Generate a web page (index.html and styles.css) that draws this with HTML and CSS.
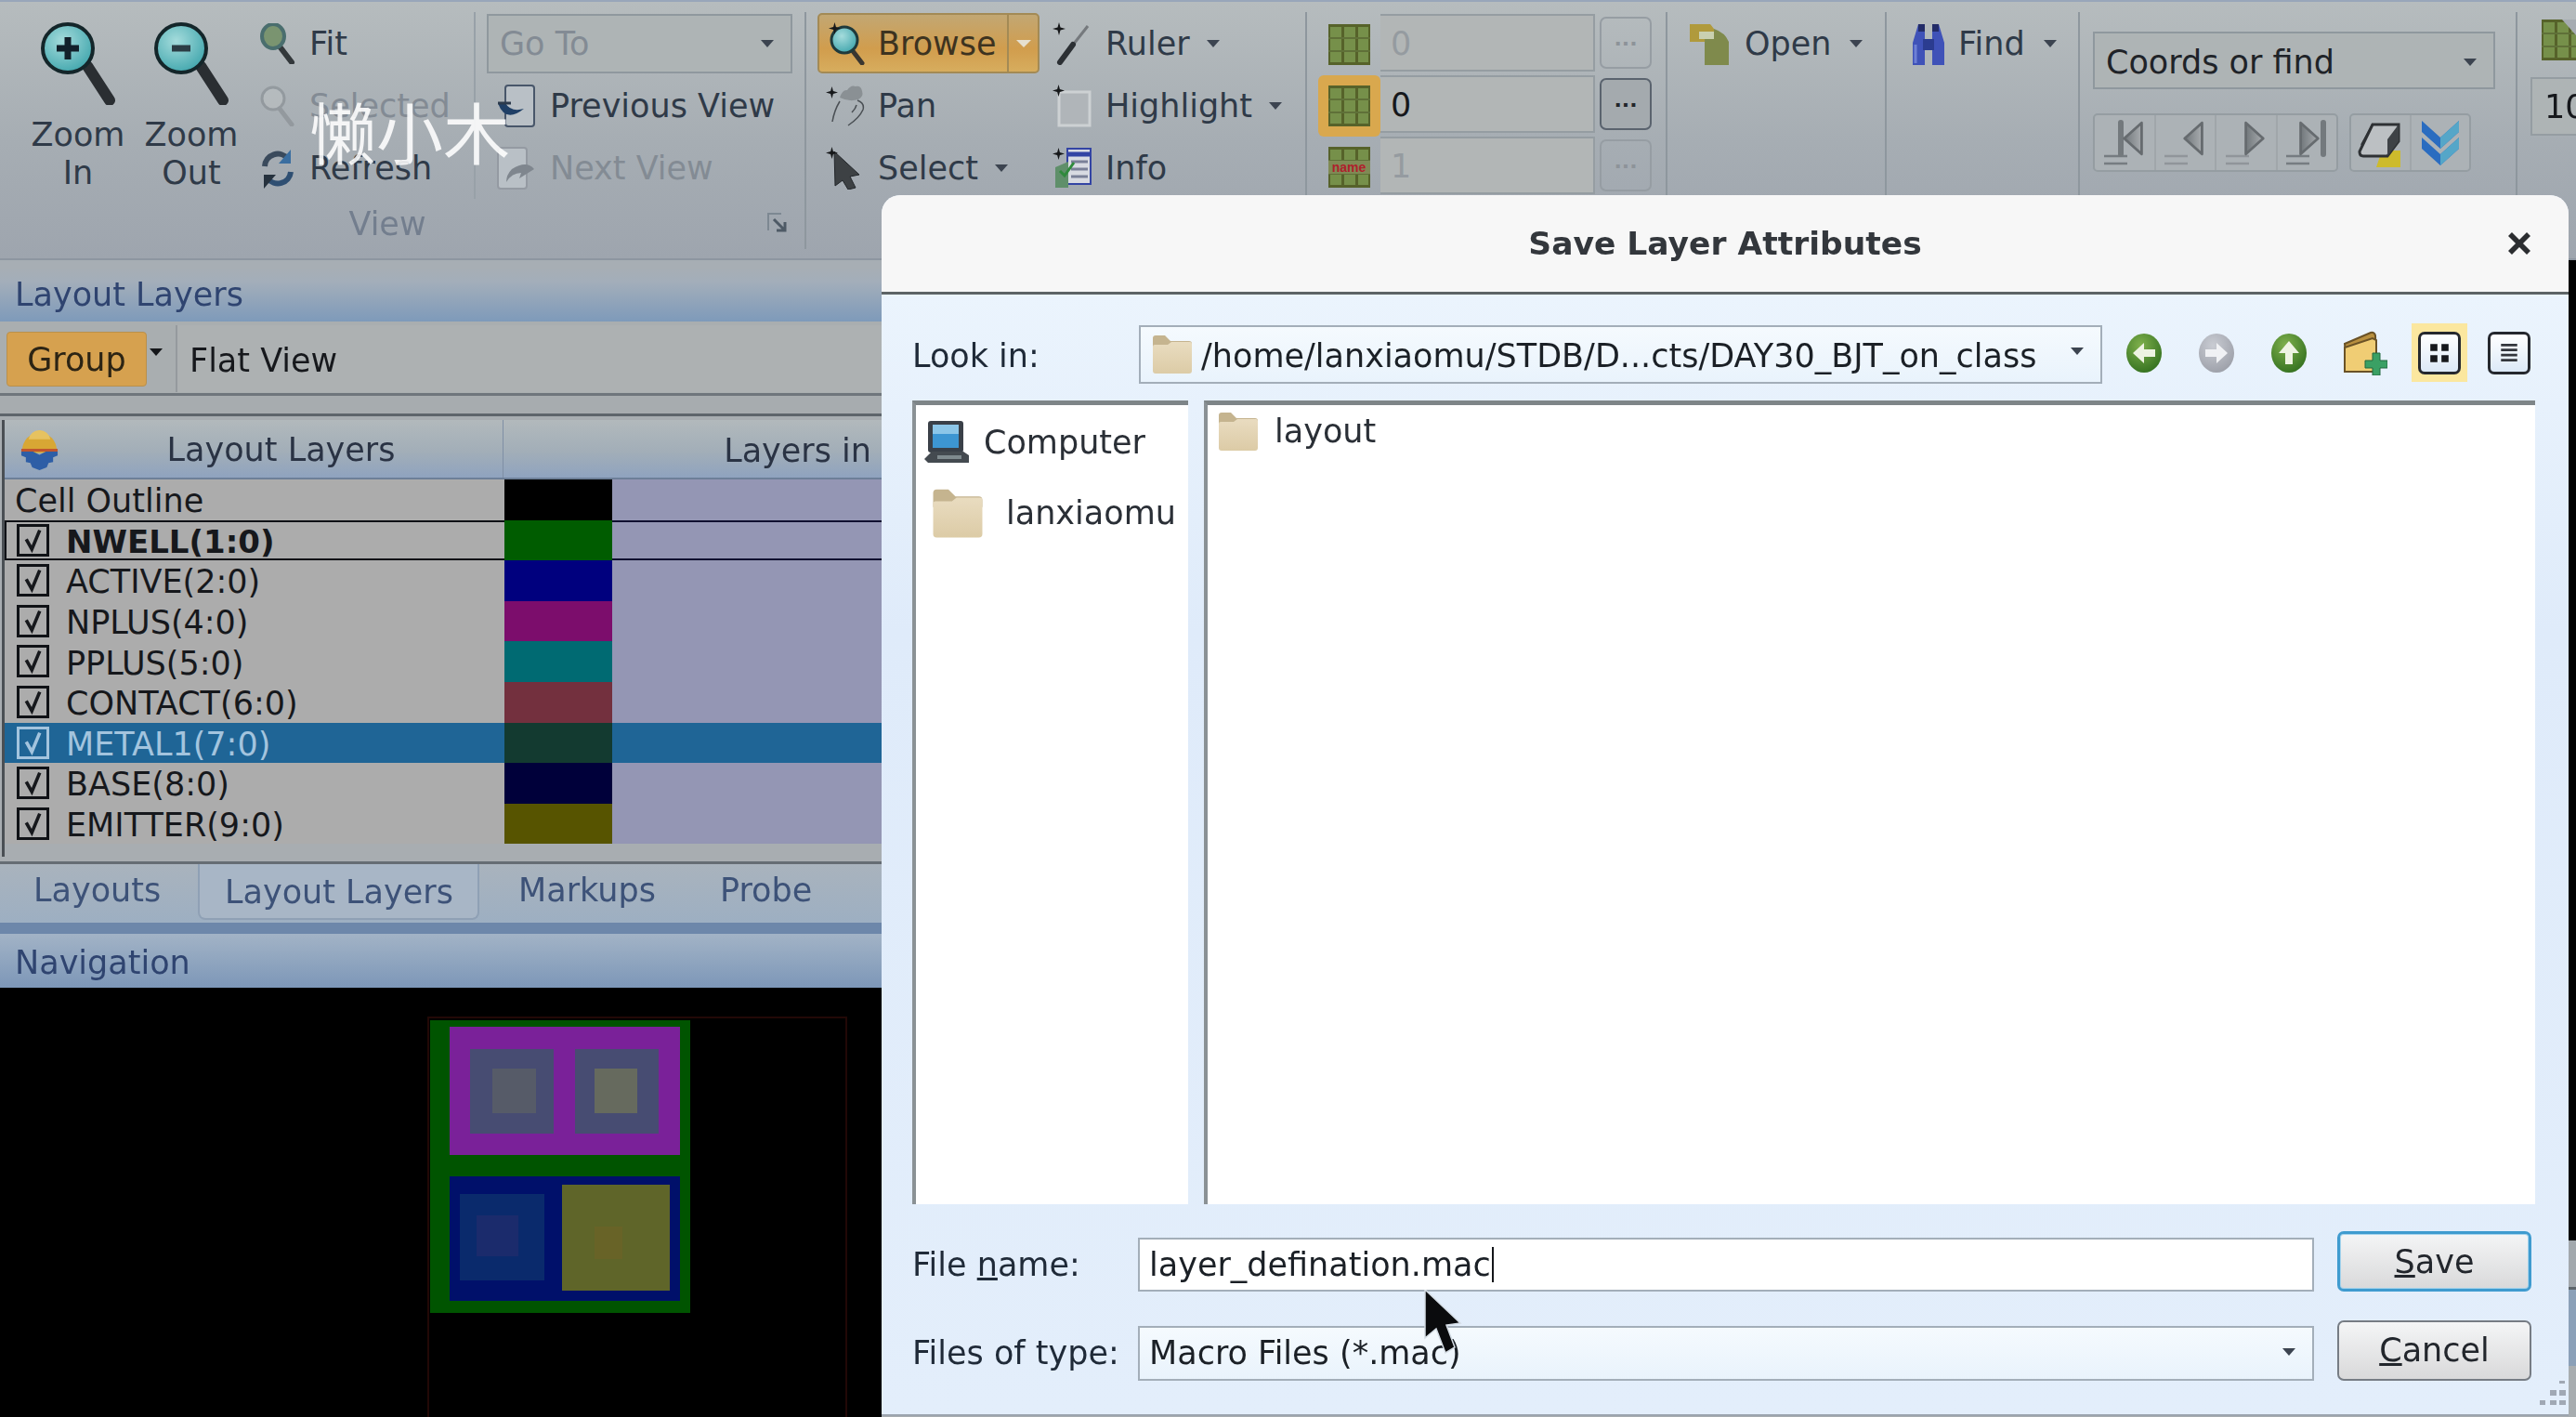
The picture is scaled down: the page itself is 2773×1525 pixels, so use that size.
FILE: index.html
```html
<!DOCTYPE html>
<html lang="en">
<head>
  <meta charset="UTF-8" />
  <title>Save Layer Attributes</title>
  <link rel="stylesheet" href="styles.css">
</head>
<body>

<svg class="defs" aria-hidden="true">
  <defs>
    <radialGradient id="teal" cx="40%" cy="35%" r="70%"><stop offset="0" stop-color="#a5dcdc"/><stop offset="1" stop-color="#3fa5ac"/></radialGradient>
    <radialGradient id="greenball" cx="40%" cy="30%" r="75%"><stop offset="0" stop-color="#7fb04c"/><stop offset="1" stop-color="#33701f"/></radialGradient>
    <radialGradient id="greyball" cx="40%" cy="30%" r="75%"><stop offset="0" stop-color="#c9ccd3"/><stop offset="1" stop-color="#9c9fa8"/></radialGradient>
    <linearGradient id="folder" x1="0" y1="0" x2="0" y2="1"><stop offset="0" stop-color="#e9dcc0"/><stop offset="1" stop-color="#dccba6"/></linearGradient>
    <linearGradient id="tri" x1="0" y1="0" x2="1" y2="0"><stop offset="0" stop-color="#71777b"/><stop offset="1" stop-color="#a8acaf"/></linearGradient>
    <symbol id="lens" viewBox="0 0 82 90">
      <path d="M50 48 L74 85" stroke="#2a2e32" stroke-width="12" stroke-linecap="round"/>
      <ellipse cx="29" cy="29" rx="27" ry="26" fill="url(#teal)" stroke="#14262a" stroke-width="4"/>
    </symbol>
    <symbol id="small-lens" viewBox="0 0 38 44">
      <path d="M21 25 L34 42" stroke="#33383b" stroke-width="6" stroke-linecap="round"/>
      <ellipse cx="14" cy="14" rx="12" ry="13" fill="#7a9470" stroke="#4a6e6e" stroke-width="4"/>
    </symbol>
    <symbol id="star" viewBox="0 0 14 14">
      <path d="M7 0 L8.500 5.500 L14 7 L8.500 8.500 L7 14 L5.500 8.500 L0 7 L5.500 5.500Z" fill="#16181a"/>
    </symbol>
    <symbol id="folder-ic" viewBox="0 0 46 44">
      <path d="M2 5 a3 3 0 0 1 3-3 h10 l6 6 h20 a3 3 0 0 1 3 3 v6 H2z" fill="#c5b48f"/>
      <path d="M2 14 q0-2 2-2 h14 l4-3 h20 q2 0 2 2 v29 q0 3-3 3 H5 q-3 0-3-3z" fill="url(#folder)"/>
    </symbol>
    <symbol id="cell-ic" viewBox="0 0 45 44">
      <rect width="45" height="44" fill="#56622a"/>
      <path d="M2 3 h12 v38 H2z M17 3 h12 v38 H17z M32 3 h11 v38 H32z" fill="#76904a"/>
      <path d="M0 15 H45 M0 29 H45" stroke="#5f7038" stroke-width="2"/>
    </symbol>
    <symbol id="tick" viewBox="0 0 24 24"><path d="M6 11 L11 20 L18 3" fill="none" stroke="currentColor" stroke-width="3"/></symbol>
    <symbol id="tri-left" viewBox="0 0 30 40"><path d="M24 2 L4 20 L24 38Z" fill="url(#tri)" stroke="#666b6f" stroke-width="3" stroke-linejoin="round"/></symbol>
    <symbol id="tri-right" viewBox="0 0 30 40"><path d="M6 2 L26 20 L6 38Z" fill="url(#tri)" stroke="#666b6f" stroke-width="3" stroke-linejoin="round"/></symbol>
  </defs>
</svg>

<div class="app">

  <div class="ribbon">

    <div class="group group-view">
      <div class="group-body">
        <div class="big-btn">
          <svg class="ic-zoom" viewBox="0 0 82 90"><use href="#lens"/><path d="M29 17v24M17 29h24" stroke="#12202a" stroke-width="7"/></svg>
          <span>Zoom<br>In</span>
        </div>
        <div class="big-btn">
          <svg class="ic-zoom" viewBox="0 0 82 90"><use href="#lens"/><path d="M19 29h20" stroke="#2b3c44" stroke-width="7"/></svg>
          <span>Zoom<br>Out</span>
        </div>
        <div class="stack col-fit">
          <div class="item"><svg class="ic ic-38" viewBox="0 0 38 44"><use href="#small-lens"/></svg>Fit</div>
          <div class="item off"><svg class="ic ic-38 faded" viewBox="0 0 38 44"><path d="M21 25 L34 42" stroke="#8e9499" stroke-width="5" stroke-linecap="round"/><circle cx="14" cy="14" r="12" fill="#b8bdc0" stroke="#8e9499" stroke-width="3"/></svg>Selected</div>
          <div class="item"><svg class="ic ic-38" viewBox="0 0 38 44"><path d="M5 20 A14 14 0 0 1 30 12" fill="none" stroke="#3a4a5c" stroke-width="6"/><path d="M33 2 v15 h-13z" fill="#3a6ea0"/><path d="M33 26 A14 14 0 0 1 8 33" fill="none" stroke="#2f4f72" stroke-width="6"/><path d="M4 44 v-15 h13z" fill="#26323e"/></svg>Refresh</div>
        </div>
        <div class="stack col-goto">
          <div class="row-slot"><div class="combo combo-goto off"><span>Go To</span><i class="arrow"></i></div></div>
          <div class="item item-view"><svg class="ic ic-44" viewBox="0 0 44 46"><rect x="11" y="1" width="31" height="44" rx="3" fill="#b9c0c6" stroke="#48566a" stroke-width="2"/><path d="M3 20 q8 22 28 6 q-14 4-20-6z" fill="#1f3f66"/><path d="M3 20 h14" stroke="#2c3a4c" stroke-width="3"/></svg>Previous View</div>
          <div class="item item-view off"><svg class="ic ic-44" viewBox="0 0 44 46"><rect x="3" y="1" width="31" height="44" rx="3" fill="#b9c0c6" stroke="#949aa2" stroke-width="2"/><path d="M42 24 q-8 -10 -24 0 q-6 6 -6 14 q6-10 16-10 l-2 6z" fill="#7f868e"/></svg>Next View</div>
        </div>
      </div>
      <div class="group-label">View<svg class="launcher" viewBox="0 0 22 22"><path d="M2 20V2h14" fill="none" stroke="#7d8892" stroke-width="2"/><path d="M8 8 l12 12 M20 11v9h-9" fill="none" stroke="#4e5a66" stroke-width="3"/></svg></div>
    </div>

    <div class="group group-browse">
      <div class="group-body browse-body">
        <div class="stack col-browse">
          <div class="row-slot">
            <div class="split-btn">
              <div class="split-main"><svg class="ic ic-42" viewBox="0 0 42 46"><path d="M25 27 L38 44" stroke="#3a3630" stroke-width="5" stroke-linecap="round"/><circle cx="19" cy="19" r="14" fill="url(#teal)" stroke="#1f3a3c" stroke-width="3"/><use href="#star" x="2" y="0" width="13" height="13"/></svg>Browse</div>
              <div class="split-drop"><i class="arrow arrow-lt"></i></div>
            </div>
          </div>
          <div class="item item-tool"><svg class="ic ic-42" viewBox="0 0 42 46"><path d="M15 14 q3-9 8-8 q4-6 9-4 q6-1 7 5 q2 6-4 9 q-10 3-20-2z" fill="#8a9094"/><path d="M7 40 Q9 28 15 18 M24 44 Q36 36 40 27 Q42 20 34 17 M28 30 Q32 26 33 22" fill="none" stroke="#4a4f54" stroke-width="1.500"/><use href="#star" x="0" y="2" width="13" height="13"/></svg>Pan</div>
          <div class="item item-tool"><svg class="ic ic-42" viewBox="0 0 42 46"><path d="M9 5 L36 30 L26 32 L32 44 L24 46 L18 36 L10 42Z" fill="#3d4144" stroke="#22262a" stroke-width="1"/><use href="#star" x="0" y="0" width="13" height="13"/></svg>Select<i class="arrow arrow-tool"></i></div>
        </div>
        <div class="stack col-ruler">
          <div class="item item-tool2"><svg class="ic ic-42" viewBox="0 0 42 46"><use href="#star" x="0" y="0" width="14" height="14"/><path d="M8 42 L38 4" stroke="#75797d" stroke-width="3"/><path d="M8 43 L22 24" stroke="#2c3034" stroke-width="6" stroke-linecap="round"/></svg>Ruler<i class="arrow arrow-ruler"></i></div>
          <div class="item item-tool2"><svg class="ic ic-42" viewBox="0 0 42 46"><rect x="7" y="8" width="33" height="36" fill="#b0b5b9" stroke="#cdd1d3" stroke-width="3"/><use href="#star" x="0" y="0" width="13" height="13"/></svg>Highlight<i class="arrow arrow-high"></i></div>
          <div class="item item-tool2"><svg class="ic ic-42" viewBox="0 0 42 46"><rect x="16" y="2" width="25" height="38" fill="#d8dae2" stroke="#3344a4" stroke-width="2"/><path d="M16 8h25" stroke="#3344a4" stroke-width="5"/><path d="M20 16h18M20 24h18M20 32h18" stroke="#7a8098" stroke-width="3"/><path d="M3 22 l14-6 v28 H3z" fill="#5f8f6a"/><path d="M8 26 l5 5 l10-14" fill="none" stroke="#2f8a3c" stroke-width="3"/><use href="#star" x="0" y="1" width="13" height="13"/></svg>Info</div>
        </div>
      </div>
    </div>

    <div class="group group-cells">
      <div class="cell-row">
        <div class="cell-icon"><svg class="ic-cell" viewBox="0 0 45 44"><use href="#cell-ic"/></svg></div>
        <div class="cell-input off">0</div>
        <div class="more off">...</div>
      </div>
      <div class="cell-row">
        <div class="cell-icon on"><svg class="ic-cell" viewBox="0 0 45 44"><use href="#cell-ic"/></svg></div>
        <div class="cell-input">0</div>
        <div class="more">...</div>
      </div>
      <div class="cell-row">
        <div class="cell-icon"><svg class="ic-cell" viewBox="0 0 45 44"><use href="#cell-ic"/><rect y="15" width="45" height="14" fill="#7f8a54"/><text x="22" y="27" class="name-tag">name</text></svg></div>
        <div class="cell-input off">1</div>
        <div class="more off">...</div>
      </div>
    </div>

    <div class="group group-open">
      <div class="item item-open"><svg class="ic ic-46" viewBox="0 0 46 46"><path d="M0 2 h22 l4 5 v14 H0z" fill="#b09a3c"/><path d="M10 10 h16 v8 H10z" fill="#c9d0b0"/><path d="M16 18 h10 V7 q12 4 16 14 v25 H16z" fill="#7f8a4c"/></svg>Open<i class="arrow arrow-open"></i></div>
    </div>

    <div class="group group-find">
      <div class="item item-open"><svg class="ic ic-42" viewBox="0 0 42 46"><path d="M4 46 V22 L10 2 h7 v44z M25 46 V2 h7 l6 20 v24z" fill="#3f52b8"/><path d="M15 18h12v12H15z" fill="#2b3c90"/><path d="M7 24v20" stroke="#6e80d6" stroke-width="3"/><path d="M10 2h7v8h-7zM25 2h7v8h-7z" fill="#232c68"/></svg>Find<i class="arrow arrow-find"></i></div>
    </div>

    <div class="group group-coords">
      <div class="combo combo-coords"><span>Coords or find</span><i class="arrow"></i></div>
      <div class="nav-row">
        <div class="btn-set set-nav">
          <div class="nav-btn"><svg viewBox="0 0 48 56"><path d="M2 42h25M2 50h25" stroke="#767c81" stroke-width="2.500"/><path d="M20 40V6" stroke="#73797d" stroke-width="6" stroke-linecap="round"/><use href="#tri-left" x="20" y="4" width="28" height="38"/></svg></div>
          <div class="nav-btn"><svg viewBox="0 0 48 56"><path d="M2 42h25M2 50h25" stroke="#90959a" stroke-width="2.500"/><use href="#tri-left" x="20" y="4" width="28" height="38"/></svg></div>
          <div class="nav-btn"><svg viewBox="0 0 48 56"><path d="M2 42h25M2 50h25" stroke="#90959a" stroke-width="2.500"/><use href="#tri-right" x="18" y="4" width="28" height="38"/></svg></div>
          <div class="nav-btn"><svg viewBox="0 0 48 56"><path d="M2 42h25M2 50h25" stroke="#767c81" stroke-width="2.500"/><use href="#tri-right" x="12" y="4" width="28" height="38"/><path d="M42 40V6" stroke="#73797d" stroke-width="6" stroke-linecap="round"/></svg></div>
        </div>
        <div class="btn-set set-erase">
          <div class="nav-btn"><svg viewBox="0 0 48 56"><path d="M26 36h20v18H20z" fill="#cdbb2c"/><path d="M16 8h28v18L32 42H6q-4 0-4-5z" fill="#bcc0c3" stroke="#2e3134" stroke-width="3"/><path d="M44 8v18L32 42V24z" fill="#3e4246"/><path d="M16 8L4 30" stroke="#2e3134" stroke-width="2"/></svg></div>
          <div class="nav-btn"><svg viewBox="0 0 48 56"><path d="M4 4 L24 22 L44 4 V16 L24 34 L4 16Z M4 22 L24 40 L44 22 V34 L24 52 L4 34Z" fill="#2a6cc0"/><path d="M24 22 L44 4 V16 L24 34Z M24 40 L44 22 V34 L24 52Z" fill="#55a6c8"/></svg></div>
        </div>
      </div>
    </div>

    <div class="group group-last">
      <svg class="ic-stack" viewBox="0 0 45 44"><use href="#cell-ic"/><path d="M22 0h23v26z" fill="#a6acb2"/></svg>
      <div class="last-input">10</div>
    </div>
  </div>

  <div class="main">
    <div class="side">
      <div class="dock-head">Layout Layers</div>
      <div class="group-bar">
        <div class="group-toggle">Group</div>
        <i class="arrow arrow-dk"></i>
        <div class="flat-view">Flat View</div>
      </div>
      <div class="bar-gap"></div>

      <div class="layers-wrap">
        <div class="layers">
          <div class="layers-head">
            <div class="layers-title">
              <svg class="ic-layers" viewBox="0 0 44 44"><path d="M3 22 a19 19 0 0 1 38 0 l-5 3 H8z" fill="#d8a734"/><path d="M22 0a12 12 0 0 1 12 10H10A12 12 0 0 1 22 0z" fill="#e6c260"/><path d="M2 23h12l8 4 8-4h12v5l-5 2v5l-5 1-2 5-8 3-8-3-2-5-5-1v-5l-5-2z" fill="#2e5ea6"/><path d="M2 22h40" stroke="#c0552e" stroke-width="3"/></svg>
              <span>Layout Layers</span>
            </div>
            <div class="layers-in">Layers in</div>
          </div>
          <div class="layer-row no-check"><div class="layer-name">Cell Outline</div><div class="swatch sw-black"></div><div class="layer-rest"></div></div>
          <div class="layer-row current"><div class="layer-name"><i class="check"><svg viewBox="0 0 24 24"><use href="#tick"/></svg></i><b>NWELL(1:0)</b></div><div class="swatch sw-green"></div><div class="layer-rest"></div></div>
          <div class="layer-row"><div class="layer-name"><i class="check"><svg viewBox="0 0 24 24"><use href="#tick"/></svg></i>ACTIVE(2:0)</div><div class="swatch sw-blue"></div><div class="layer-rest"></div></div>
          <div class="layer-row"><div class="layer-name"><i class="check"><svg viewBox="0 0 24 24"><use href="#tick"/></svg></i>NPLUS(4:0)</div><div class="swatch sw-purple"></div><div class="layer-rest"></div></div>
          <div class="layer-row"><div class="layer-name"><i class="check"><svg viewBox="0 0 24 24"><use href="#tick"/></svg></i>PPLUS(5:0)</div><div class="swatch sw-teal"></div><div class="layer-rest"></div></div>
          <div class="layer-row"><div class="layer-name"><i class="check"><svg viewBox="0 0 24 24"><use href="#tick"/></svg></i>CONTACT(6:0)</div><div class="swatch sw-red"></div><div class="layer-rest"></div></div>
          <div class="layer-row selected"><div class="layer-name"><i class="check"><svg viewBox="0 0 24 24"><use href="#tick"/></svg></i>METAL1(7:0)</div><div class="swatch sw-metal"></div><div class="layer-rest"></div></div>
          <div class="layer-row"><div class="layer-name"><i class="check"><svg viewBox="0 0 24 24"><use href="#tick"/></svg></i>BASE(8:0)</div><div class="swatch sw-navy"></div><div class="layer-rest"></div></div>
          <div class="layer-row"><div class="layer-name"><i class="check"><svg viewBox="0 0 24 24"><use href="#tick"/></svg></i>EMITTER(9:0)</div><div class="swatch sw-olive"></div><div class="layer-rest"></div></div>
        </div>
      </div>

      <div class="tabs">
        <div class="tab tab-layouts">Layouts</div>
        <div class="tab tab-active">Layout Layers</div>
        <div class="tab tab-markups">Markups</div>
        <div class="tab">Probe</div>
      </div>
      <div class="dock-head nav-head">Navigation</div>

      <div class="canvas">
        <svg class="layout-art" viewBox="0 0 949 462">
          <path d="M461 462V32H911V462" fill="none" stroke="#220806" stroke-width="2"/>
          <rect x="463" y="35" width="280" height="315" fill="#005400"/>
          <rect x="484" y="42" width="248" height="138" fill="#7a2199"/>
          <rect x="506" y="66" width="90" height="91" fill="#474c72"/>
          <rect x="619" y="66" width="90" height="91" fill="#474c72"/>
          <rect x="530" y="87" width="47" height="48" fill="#565b68"/>
          <rect x="640" y="87" width="46" height="48" fill="#666a5e"/>
          <rect x="484" y="203" width="248" height="134" fill="#00106a"/>
          <rect x="495" y="222" width="91" height="93" fill="#0a2a6c"/>
          <rect x="513" y="245" width="45" height="44" fill="#1b2b6c"/>
          <rect x="605" y="212" width="116" height="114" fill="#5f6529"/>
          <rect x="640" y="257" width="30" height="35" fill="#686327"/>
        </svg>
      </div>
    </div>

    <div class="behind">
      <div class="behind-canvas"></div>
      <div class="behind-foot"></div>
    </div>
  </div>

  <div class="watermark">懒小木</div>
</div>

<div class="dialog">
  <div class="dialog-title">
    <span>Save Layer Attributes</span>
    <svg class="close" viewBox="0 0 24 24"><path d="M4 4 L20 20 M20 4 L4 20" stroke="#2b2d30" stroke-width="4.500"/></svg>
  </div>

  <div class="dialog-body">
    <div class="look-row">
      <label class="look-label">Look in:</label>
      <div class="field path-field">
        <svg class="ic-folder" viewBox="0 0 46 44"><use href="#folder-ic"/></svg>
        <span>/home/lanxiaomu/STDB/D...cts/DAY30_BJT_on_class</span>
        <i class="arrow arrow-path"></i>
      </div>
      <div class="dir-tools">
        <svg class="ball" viewBox="0 0 40 44"><ellipse cx="20" cy="22" rx="19" ry="21" fill="url(#greenball)"/><path d="M8 22 L20 11 V18 H32 V26 H20 V33Z" fill="#eef3e2"/></svg>
        <svg class="ball" viewBox="0 0 40 44"><ellipse cx="20" cy="22" rx="19" ry="21" fill="url(#greyball)"/><path d="M32 22 L20 11 V18 H8 V26 H20 V33Z" fill="#f0f1f4"/></svg>
        <svg class="ball" viewBox="0 0 40 44"><ellipse cx="20" cy="22" rx="19" ry="21" fill="url(#greenball)"/><path d="M20 9 L31 22 H24 V34 H16 V22 H9Z" fill="#eef3e2"/></svg>
        <svg class="ball new-dir" viewBox="0 0 48 48"><path d="M2 14 L30 2 q4-1 5 3 l1 32 H4z" fill="#b88f3e" stroke="#6a5226" stroke-width="2"/><path d="M2 44 V18 L32 8 l4 2 v34z" fill="#f0cd74" stroke="#6a5226" stroke-width="2"/><path d="M32 24h8v8h8v8h-8v8h-8v-8h-8v-8h8z" fill="#3aa064" stroke="#23693f" stroke-width="1"/></svg>
        <div class="view-slot on"><div class="view-btn"><svg viewBox="0 0 22 22"><path d="M2 2h7v7H2zM13 2h7v7h-7zM2 13h7v7H2zM13 13h7v7h-7z" fill="#16181c"/></svg></div></div>
        <div class="view-slot"><div class="view-btn"><svg viewBox="0 0 22 22"><path d="M3 3h16M3 8h16M3 13h16M3 18h16" stroke="#33363c" stroke-width="2.500"/></svg></div></div>
      </div>
    </div>

    <div class="lists">
      <div class="list side-list">
        <div class="place place-computer">
          <svg class="ic-computer" viewBox="0 0 48 48"><rect x="4" y="1" width="38" height="34" rx="3" fill="#3a4048"/><rect x="9" y="5" width="28" height="25" fill="#3d96d2"/><rect x="9" y="5" width="28" height="10" fill="#8cc6e8"/><path d="M0 42 L8 34 H42 L48 38 V46 H4z" fill="#444a50"/><rect x="14" y="38" width="26" height="4" fill="#7f8a8e"/></svg>
          Computer
        </div>
        <div class="place place-home">
          <svg class="ic-folder-big" viewBox="0 0 46 44"><use href="#folder-ic"/></svg>
          lanxiaomu
        </div>
      </div>
      <div class="list file-list">
        <div class="file-item">
          <svg class="ic-folder" viewBox="0 0 46 44"><use href="#folder-ic"/></svg>
          layout
        </div>
      </div>
    </div>

    <div class="form-grid">
      <label class="form-label">File <u>n</u>ame:</label>
      <div class="field name-field"><span>layer_defination.mac</span><i class="caret"></i></div>
      <div class="dlg-btn primary"><u>S</u>ave</div>
      <label class="form-label">Files of type:</label>
      <div class="field type-field"><span>Macro Files (*.mac)</span><i class="arrow arrow-type"></i></div>
      <div class="dlg-btn"><u>C</u>ancel</div>
    </div>
  </div>

  <svg class="grip" viewBox="0 0 30 26"><path d="M22 0h6v3h-6zM12 10h7v6h-7zM22 10h7v6h-7zM1 21h6v5H1zM12 21h7v5h-7zM22 21h7v5h-7z" fill="#a0a8b4"/></svg>
</div>

<svg class="cursor" viewBox="0 0 42 72"><path d="M2 0 L2 52 L14 42 L24 68 L34 62 L25 38 L40 36Z" fill="#0a0b0d" stroke="#d4dce4" stroke-width="1.500"/></svg>

</body>
</html>
```

FILE: styles.css
```css
* {
  box-sizing: border-box;
}
html, body {
  margin: 0;
  height: 100%;
}
body {
  width: 2773px;
  height: 1525px;
  overflow: hidden;
  position: relative;
  font-family: "DejaVu Sans", sans-serif;
  font-size: 35px;
  color: #2f3a48;
  background: #000;
}
.defs {
  display: block;
  width: 0;
  height: 0;
}
.app {
  height: 1525px;
  display: flex;
  flex-direction: column;
  filter: blur(0.7px);
}

/* ribbon */
.ribbon {
  height: 280px;
  flex: none;
  display: flex;
  padding-top: 11px;
  background: linear-gradient(#b6bcbe, #a6adb3 55%, #9ea5ae);
  border-top: 2px solid #98a6ba;
  border-bottom: 2px solid #8d96a0;
}
.group {
  height: 255px;
  border-right: 2px solid #8e979e;
  flex: none;
}
.group-view { width: 868px; }
.group-browse { width: 539px; }
.group-cells { width: 388px; padding: 2px 0 0 12px; }
.group-open { width: 236px; }
.group-find { width: 208px; }
.group-coords { width: 471px; padding: 21px 0 0 14px; }
.group-last { flex: 1; border-right: 0; padding: 8px 0 0 14px; }
.group-body {
  display: flex;
  height: 201px;
}
.group-label {
  position: relative;
  text-align: center;
  color: #737e8e;
  line-height: 54px;
  padding-right: 32px;
}
.launcher {
  position: absolute;
  right: 19px;
  top: 14px;
  width: 22px;
  height: 22px;
}
.big-btn {
  width: 122px;
  text-align: center;
  line-height: 41px;
}
.big-btn:first-child { margin-left: 23px; }
.big-btn span { display: block; margin-top: 12px; }
.ic-zoom {
  display: block;
  width: 82px;
  height: 90px;
  margin: 10px 0 0 21px;
}
.stack {
  display: flex;
  flex-direction: column;
}
.item, .row-slot {
  height: 67px;
  display: flex;
  align-items: center;
  white-space: nowrap;
}
.ic {
  flex: none;
  margin-right: 15px;
}
.ic-38 { width: 38px; height: 44px; }
.ic-42 { width: 42px; height: 46px; }
.ic-44 { width: 44px; height: 46px; }
.ic-46 { width: 46px; height: 46px; }
.faded { opacity: .8; }
.off { color: #838b94; }
.col-fit {
  width: 232px;
  margin-left: 13px;
  border-right: 2px solid #98a1a8;
}
.col-goto { margin-left: 12px; }
.item-view { padding-left: 9px; }
.combo {
  display: flex;
  align-items: center;
  justify-content: space-between;
  border: 2px solid #8f989e;
  background: #aeb4b5;
}
.combo-goto {
  width: 329px;
  height: 64px;
  padding: 0 18px 0 12px;
}
.combo-coords {
  width: 433px;
  height: 62px;
  padding: 4px 18px 0 12px;
  color: #1f2328;
}
.arrow {
  display: inline-block;
  width: 0;
  height: 0;
  border-left: 7px solid transparent;
  border-right: 7px solid transparent;
  border-top: 8px solid #3c4450;
  flex: none;
}
.arrow-lt { border-top-color: #e6e0d0; border-left-width: 8px; border-right-width: 8px; }
.arrow-dk { border-top-color: #15171a; margin: 0 14px 14px 3px; }
.browse-body { padding-left: 12px; }
.col-browse { width: 253px; }
.split-btn {
  width: 239px;
  height: 65px;
  display: flex;
  border: 2px solid #a38a55;
  border-radius: 5px;
  color: #3d3320;
  background: linear-gradient(#c2a773, #d19d4d 60%, #d7ad5e);
}
.split-main {
  flex: 1;
  display: flex;
  align-items: center;
  padding-left: 8px;
}
.split-main .ic { margin-right: 13px; }
.split-drop {
  width: 33px;
  display: flex;
  align-items: center;
  justify-content: center;
  border-left: 2px solid #a38a55;
}
.item-tool { padding-left: 9px; }
.item-tool .ic { margin-right: 14px; }
.item-tool2 .ic { margin-right: 15px; }
.arrow-tool { margin-left: 18px; }
.arrow-ruler { margin-left: 18px; }
.arrow-high { margin-left: 18px; }
.arrow-open { margin-left: 20px; }
.arrow-find { margin-left: 20px; }

/* cell selectors */
.cell-row {
  height: 66px;
  display: flex;
}
.cell-icon {
  width: 67px;
  height: 66px;
  display: flex;
  align-items: center;
  justify-content: center;
  border-radius: 6px;
}
.cell-icon.on { background: #d9a84e; }
.ic-cell { width: 45px; height: 44px; }
.name-tag {
  font-family: "Liberation Sans", sans-serif;
  font-size: 14px;
  font-weight: bold;
  fill: #b0202c;
  text-anchor: middle;
}
.cell-input {
  width: 231px;
  height: 62px;
  line-height: 60px;
  padding-left: 11px;
  color: #16181c;
  background: #b2b6b6;
  border: 2px solid #959da2;
  border-left: 0;
}
.cell-input.off { color: #959ba0; }
.more {
  width: 56px;
  height: 56px;
  margin: 3px 0 0 5px;
  border: 2px solid #5a636e;
  border-radius: 7px;
  background: #a4aaae;
  text-align: center;
  line-height: 44px;
  font-size: 22px;
  font-weight: bold;
  color: #22252a;
}
.more.off {
  border-color: #969da3;
  background: transparent;
  color: #8d9399;
}
.item-open { padding-left: 24px; }
.group-find .ic { margin-right: 11px; }
.group-open .ic { margin-right: 13px; }
.nav-row {
  display: flex;
  gap: 12px;
  margin-top: 26px;
}
.btn-set {
  height: 63px;
  display: flex;
  border: 2px solid #959da2;
  border-radius: 5px;
  background: #acb2b6;
}
.set-nav { width: 264px; }
.set-erase { width: 131px; }
.nav-btn {
  flex: 1;
  display: flex;
  align-items: center;
  justify-content: center;
  border-right: 2px solid #a0a6aa;
}
.nav-btn:last-child { border-right: 0; }
.nav-btn svg { width: 48px; height: 56px; flex: none; }
.ic-stack {
  display: block;
  width: 45px;
  height: 44px;
  margin-left: 12px;
}
.last-input {
  width: 100px;
  height: 63px;
  line-height: 60px;
  margin-top: 18px;
  padding-left: 13px;
  color: #16181c;
  background: #aeb4b5;
  border: 2px solid #959da2;
}

/* left dock */
.main {
  flex: 1;
  display: flex;
  min-height: 0;
}
.side {
  width: 949px;
  flex: none;
  display: flex;
  flex-direction: column;
}
.dock-head {
  height: 66px;
  flex: none;
  padding: 13px 0 0 16px;
  line-height: 48px;
  color: #2f4470;
  background: linear-gradient(#a7aeb4 12%, #a3aeba 35%, #7e9aba);
}
.group-bar {
  height: 80px;
  flex: none;
  display: flex;
  align-items: center;
  padding: 3px 0 0 7px;
  background: #a9aeb0;
  border-bottom: 3px solid #6f767c;
}
.group-toggle {
  width: 151px;
  height: 59px;
  line-height: 58px;
  text-align: center;
  color: #2c2414;
  background: #d6a14f;
  border: 1px solid #b9904c;
  border-radius: 4px;
}
.flat-view {
  flex: 1;
  height: 72px;
  line-height: 76px;
  padding-left: 13px;
  color: #16181c;
  background: #adb1b2;
  border-left: 2px solid #959a9e;
}
.bar-gap {
  height: 22px;
  flex: none;
  background: #a7acaf;
  border-bottom: 3px solid #5e656b;
}
.layers-wrap {
  height: 482px;
  flex: none;
  padding: 4px 0 0 2px;
  background: #a8adb1;
  border-bottom: 3px solid #666d74;
}
.layers {
  border-left: 3px solid #4a4f54;
  height: 470px;
}
.layers-head {
  height: 64px;
  display: flex;
  color: #2a3344;
  line-height: 62px;
  background: linear-gradient(#b2b9bc, #a2aeb8 55%, #8fa3bf);
  border-bottom: 2px solid #6d7f98;
}
.layers-title {
  width: 537px;
  display: flex;
  align-items: center;
  padding: 2px 0 0 16px;
  border-right: 1px solid #7f8fa5;
}
.layers-title span {
  flex: 1;
  text-align: center;
}
.ic-layers {
  width: 43px;
  height: 43px;
}
.layers-in {
  flex: 1;
  text-align: right;
  padding: 2px 11px 0 0;
}
.layer-row {
  height: 43.6px;
  display: flex;
  position: relative;
  color: #16181c;
  background: #acacac;
}
.layer-name {
  width: 538px;
  display: flex;
  align-items: center;
  padding: 3px 0 0 66px;
  font-size: 35px;
  white-space: nowrap;
}
.layer-name b { font-weight: bold; font-size: 34px; }
.no-check .layer-name { padding-left: 11px; }
.check {
  position: absolute;
  left: 13px;
  top: 4px;
  width: 35px;
  height: 35px;
  border: 3px solid #101216;
}
.check svg {
  display: block;
  width: 29px;
  height: 29px;
}
.swatch {
  width: 116px;
  flex: none;
}
.layer-rest {
  flex: 1;
  background: #9496b4;
}
.current {
  box-shadow: inset 0 2px #101216, inset 0 -2px #101216;
}
.current .layer-rest {
  box-shadow: inset 0 2px #101030, inset 0 -2px #101030;
}
.current .layer-name {
  box-shadow: inset 2px 0 #101216, inset 0 2px #101216, inset 0 -2px #101216;
}
.selected {
  color: #a3c4de;
}
.selected .layer-name, .selected .layer-rest { background: #1f6596; }
.selected .check { border-color: #a3c4de; }
.sw-black { background: #000; }
.sw-green { background: #005c00; }
.sw-blue { background: #00007e; }
.sw-purple { background: #7c0d6c; }
.sw-teal { background: #006a72; }
.sw-red { background: #73303e; }
.sw-metal { background: #133a30; }
.sw-navy { background: #00003a; }
.sw-olive { background: #575400; }
.tabs {
  height: 63px;
  flex: none;
  display: flex;
  color: #3d5278;
  background: linear-gradient(#a9b3bd, #9dafc2);
}
.tab {
  padding: 6px 0 0;
  line-height: 44px;
}
.tab-layouts { margin-left: 36px; width: 177px; }
.tab-active {
  width: 303px;
  height: 60px;
  padding: 8px 0 0 27px;
  background: #a8b6c6;
  border: 2px solid #8fa0b5;
  border-top: 0;
  border-radius: 0 0 8px 8px;
}
.tab-markups { margin-left: 42px; width: 217px; }
.nav-head {
  height: 70px;
  padding-top: 19px;
  background: linear-gradient(#6d87aa 12px, #a2b3c6 12px, #7d97b8);
}
.canvas {
  flex: 1;
  background: #000;
  min-height: 0;
}
.layout-art {
  display: block;
  width: 949px;
  height: 462px;
}
.behind {
  flex: 1;
  display: flex;
  flex-direction: column;
}
.behind-canvas {
  flex: 1;
  background: #000;
}
.behind-foot {
  height: 190px;
  background: linear-gradient(#a2a8ad 50px, #5e656b 50px, #5e656b 53px, #8ba0b8 53px, #8ba0b8 135px, #a8adb0 135px);
}
.watermark {
  position: absolute;
  left: 333px;
  top: 100px;
  font-family: "Noto Sans CJK SC", sans-serif;
  font-size: 72px;
  font-weight: 400;
  line-height: 80px;
  color: rgba(255, 255, 255, .88);
  white-space: nowrap;
}

/* save dialog */
.dialog {
  position: absolute;
  left: 949px;
  top: 210px;
  width: 1816px;
  height: 1314px;
  display: flex;
  flex-direction: column;
  border-radius: 20px 20px 0 0;
  overflow: hidden;
  filter: blur(0.6px);
  color: #1f2a38;
  background: #e3eefb;
  border-bottom: 2px solid #9ca4ae;
}
.dialog-title {
  height: 107px;
  flex: none;
  position: relative;
  display: flex;
  align-items: center;
  justify-content: center;
  font-size: 34.500px;
  font-weight: bold;
  color: #33373c;
  background: #f7f7f7;
  border-bottom: 3px solid #5d6466;
}
.close {
  position: absolute;
  right: 38px;
  top: 37px;
  width: 30px;
  height: 30px;
}
.dialog-body {
  flex: 1;
  position: relative;
  padding: 32px 36px 0 33px;
  background: linear-gradient(#ebf4fd, #dfebfa 30%, #e3eefb);
  min-height: 0;
}
.look-row {
  height: 64px;
  display: flex;
  align-items: center;
}
.look-label { width: 244px; flex: none; padding-top: 3px; }
.field {
  display: flex;
  align-items: center;
  border: 2px solid #a3aeb9;
  background: linear-gradient(#f5fafe, #e9f3fc);
  color: #1b2026;
}
.path-field {
  width: 1037px;
  height: 63px;
  flex: none;
  padding-left: 11px;
  position: relative;
}
.path-field .ic-folder { margin-right: 8px; }
.path-field span { white-space: nowrap; padding-top: 3px; }
.ic-folder {
  width: 46px;
  height: 44px;
  flex: none;
}
.arrow-path {
  position: absolute;
  right: 18px;
  top: 22px;
}
.dir-tools {
  display: flex;
  align-items: center;
  margin: -3px 0 0 25px;
  flex: none;
}
.ball {
  width: 40px;
  height: 44px;
  margin-right: 38px;
  flex: none;
}
.new-dir {
  width: 48px;
  height: 48px;
  margin-right: 26px;
}
.view-slot {
  width: 60px;
  height: 63px;
  display: flex;
  align-items: center;
  justify-content: center;
  margin-right: 15px;
}
.view-slot.on { background: #fbe79f; }
.view-btn {
  width: 46px;
  height: 46px;
  display: flex;
  align-items: center;
  justify-content: center;
  border: 3px solid #25282e;
  border-radius: 7px;
  background: linear-gradient(#fff, #dce9f7);
}
.view-btn svg { width: 24px; height: 24px; }
.lists {
  height: 865px;
  margin-top: 18px;
  display: flex;
  gap: 17px;
}
.list {
  height: 100%;
  background: #fff;
  border-top: 5px solid #7e8588;
  border-left: 4px solid #8a9195;
}
.side-list { width: 297px; flex: none; }
.file-list { flex: 1; }
.place {
  display: flex;
  align-items: center;
  white-space: nowrap;
  color: #2a2f36;
}
.place-computer { padding: 16px 0 0 9px; }
.ic-computer { width: 48px; height: 48px; margin-right: 16px; }
.place-home { padding: 24px 0 0 16px; }
.ic-folder-big { width: 58px; height: 56px; margin-right: 23px; }
.file-item {
  display: flex;
  align-items: center;
  padding: 6px 0 0 10px;
  color: #2a2f36;
}
.file-item .ic-folder { margin-right: 16px; }
.form-grid {
  margin-top: 29px;
  display: grid;
  grid-template-columns: 243px 1266px 1fr;
  grid-template-rows: 65px 66px;
  row-gap: 30px;
  align-items: center;
}
.form-label, .name-field, .type-field {
  margin-top: 6px;
}
.name-field {
  height: 58px;
  padding-left: 10px;
  background: #fff;
}
.caret {
  width: 2px;
  height: 38px;
  background: #14161a;
  margin-left: 1px;
}
.type-field {
  height: 59px;
  padding-left: 10px;
  position: relative;
}
.arrow-type {
  position: absolute;
  right: 18px;
  top: 22px;
}
.dlg-btn {
  width: 209px;
  height: 65px;
  margin-left: 25px;
  text-align: center;
  line-height: 60px;
  color: #22262c;
  border: 2px solid #767c84;
  border-radius: 7px;
  background: linear-gradient(#f4f5f6, #d9d9da);
}
.dlg-btn.primary {
  border: 3px solid #3f9bcf;
  box-shadow: inset 0 0 0 1px #a4d3ec;
}
.grip {
  position: absolute;
  right: 2px;
  bottom: 10px;
  width: 30px;
  height: 26px;
}
.cursor {
  position: absolute;
  left: 1532px;
  top: 1388px;
  width: 42px;
  height: 72px;
}
```
